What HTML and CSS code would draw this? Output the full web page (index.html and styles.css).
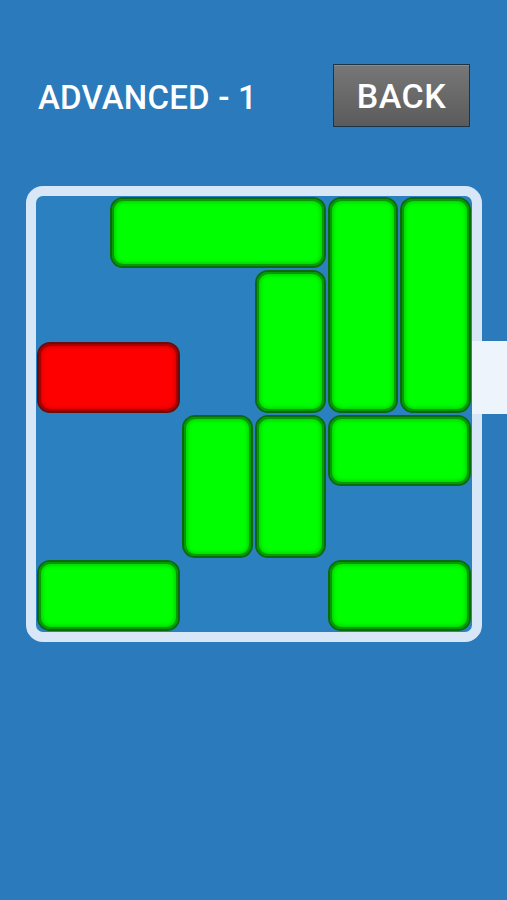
FILE: index.html
```html
<!DOCTYPE html>
<html>
<head>
<meta charset="utf-8">
<link rel="stylesheet" href="styles.css">
</head>
<body>
<div class="screen">
  <header class="top">
    <h1 class="title">ADVANCED - 1</h1>
    <button class="back">BACK</button>
  </header>
  <div class="board-wrap">
    <div class="board">
      <div class="block green h" style="grid-area: 1 / 2 / 2 / 5"></div>
      <div class="block green v" style="grid-area: 1 / 5 / 4 / 6"></div>
      <div class="block green v" style="grid-area: 1 / 6 / 4 / 7"></div>
      <div class="block green v" style="grid-area: 2 / 4 / 4 / 5"></div>
      <div class="block red h" style="grid-area: 3 / 1 / 4 / 3"></div>
      <div class="block green v" style="grid-area: 4 / 3 / 6 / 4"></div>
      <div class="block green v" style="grid-area: 4 / 4 / 6 / 5"></div>
      <div class="block green h" style="grid-area: 4 / 5 / 5 / 7"></div>
      <div class="block green h" style="grid-area: 6 / 1 / 7 / 3"></div>
      <div class="block green h" style="grid-area: 6 / 5 / 7 / 7"></div>
    </div>
    <div class="exit"></div>
  </div>
</div>
</body>
</html>
```
FILE: styles.css
```css
html, body {
  margin: 0;
  padding: 0;
  background: #2a7abc;
}
.screen {
  width: 507px;
  height: 900px;
  background: #2a7abc;
  font-family: Roboto, "Liberation Sans", sans-serif;
  overflow: hidden;
}
.top {
  display: flex;
  align-items: center;
  justify-content: space-between;
  padding: 64px 37px 0 38px;
  height: 63px;
}
.title {
  margin: 0;
  color: #ffffff;
  font-size: 33px;
  font-weight: 500;
  letter-spacing: 0.2px;
  line-height: 1;
  padding-top: 3px;
}
.back {
  width: 137px;
  height: 63px;
  margin: 0;
  padding: 0;
  border: 1.5px solid #1d3447;
  background: linear-gradient(#777777, #5b5b5b);
  color: #ffffff;
  font-family: Roboto, "Liberation Sans", sans-serif;
  font-size: 34px;
  font-weight: 500;
  letter-spacing: 0.5px;
  box-shadow: inset 0 1px 0 rgba(255,255,255,0.15);
}
.board-wrap {
  position: relative;
  margin: 59px 0 0 26px;
  width: 456px;
  height: 456px;
}
.board {
  box-sizing: border-box;
  width: 456px;
  height: 456px;
  border: 10px solid #d7e7f8;
  border-radius: 17px;
  background: #2b80c0;
  display: grid;
  grid-template-columns: repeat(6, 1fr);
  grid-template-rows: repeat(6, 1fr);
}
.block {
  margin: 1px;
  border-radius: 13px;
}
.green {
  background: #00ff00;
  border: 2px solid #0a6a0c;
  box-shadow: inset 0 0 0 2px #079807, inset 0 0 4px 3px rgba(0,120,0,0.4);
}
.red {
  background: #ff0000;
  border: 2px solid #6e0a0a;
  box-shadow: inset 0 0 0 2px #a80000, inset 0 0 4px 3px rgba(130,0,0,0.35);
}
.exit {
  position: absolute;
  left: 446px;
  top: 155px;
  width: 35px;
  height: 73px;
  background: #eef4fc;
}
```
